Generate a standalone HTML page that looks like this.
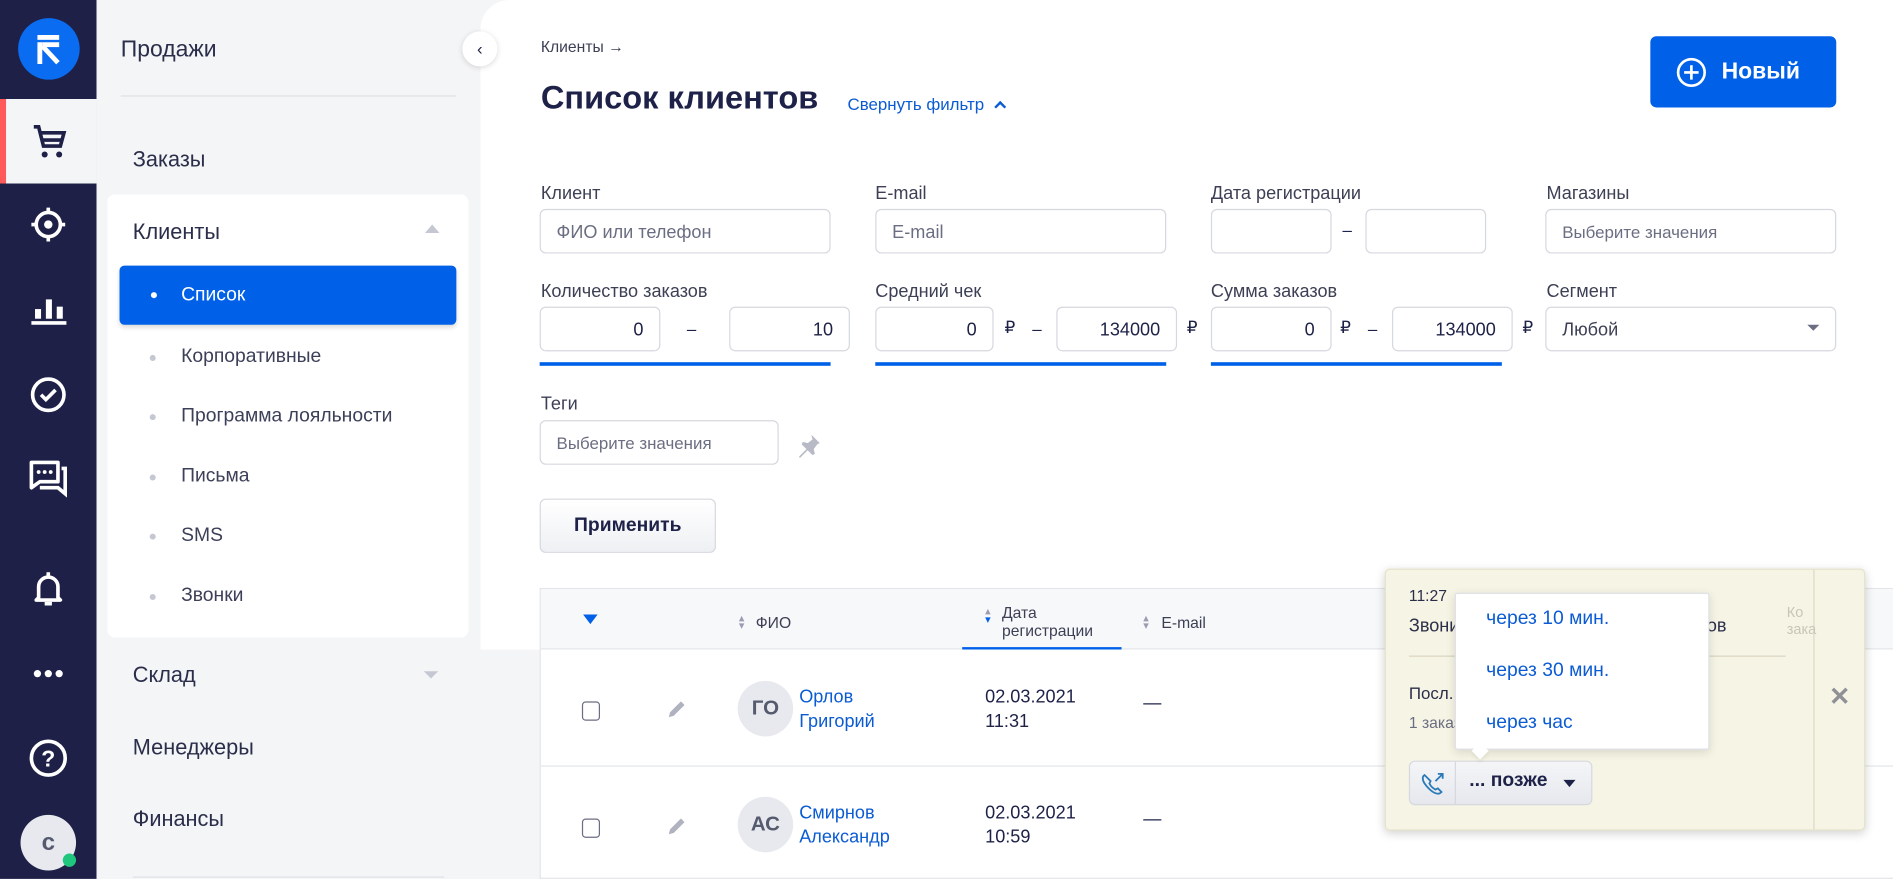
<!DOCTYPE html>
<html><head><meta charset="utf-8"><style>
*{box-sizing:border-box;margin:0;padding:0}
html,body{width:1893px;height:879px;overflow:hidden;background:#f4f5f7}
#w{position:absolute;left:0;top:0;width:1568px;height:728px;transform:scale(1.20727);transform-origin:0 0;font-family:"Liberation Sans","Noto Sans CJK SC",sans-serif;color:#1e2248}
.a{position:absolute}
.rail{left:0;top:0;width:80px;height:728px;background:#1e2048}
.ic{position:absolute;left:20px;width:40px;height:40px}
.side{left:80px;top:0;width:318px;height:728px;background:#f4f5f7}
.mi{position:absolute;left:30px;font-size:18px;color:#2b2e4a}
.sub{position:absolute;left:70px;font-size:16px;color:#3c3f58}
.dot{position:absolute;left:44px;width:5px;height:5px;border-radius:50%;background:#c5c8d3}
.main{left:398px;top:0;width:1170px;height:538px;background:#fff;border-top-left-radius:24px}
.lbl{position:absolute;font-size:15px;color:#3d4055}
.inp{position:absolute;height:37px;border:1px solid #d6d8e0;border-radius:5px;background:#fff;font-size:15px;color:#6b6e82;padding:10px 13px}
.num{text-align:right;color:#1e2248}
.rub{position:absolute;font-size:14px;color:#1e2248}
.uline{position:absolute;height:3px;background:#0061e8}
.blue{color:#0b5bd3}
</style></head><body><div id="w">
<div class="a rail">
 <div class="a" style="left:15px;top:15px;width:51px;height:51px;border-radius:50%;background:#0a6cf0"></div>
 <svg class="a" style="left:28px;top:26px" width="26" height="30" viewBox="0 0 26 30"><rect x="3" y="3" width="18" height="4" fill="#fff"/><rect x="7" y="9" width="14" height="4" fill="#fff"/><rect x="3" y="9" width="4" height="18" fill="#fff"/><path d="M7 12 L20 26" stroke="#fff" stroke-width="4"/></svg>
 <div class="a" style="left:0;top:82px;width:80px;height:70px;background:#f4f5f7"></div>
 <div class="a" style="left:0;top:82px;width:5px;height:70px;background:#ff5a5a"></div>
 <svg class="ic" style="top:97px" viewBox="0 0 40 40"><path d="M8 8h4l4 16h14l3-11H14" fill="none" stroke="#1e2048" stroke-width="3"/><path d="M15 19h16" stroke="#1e2048" stroke-width="3"/><circle cx="17" cy="31" r="2.5" fill="#1e2048"/><circle cx="29" cy="31" r="2.5" fill="#1e2048"/></svg>
 <svg class="ic" style="top:166px" viewBox="0 0 40 40"><circle cx="20" cy="20" r="10" fill="none" stroke="#fff" stroke-width="3"/><circle cx="20" cy="20" r="3.5" fill="#fff"/><path d="M20 6v5M20 29v5M6 20h5M29 20h5" stroke="#fff" stroke-width="3"/></svg>
 <svg class="ic" style="top:236px" viewBox="0 0 40 40"><rect x="9" y="20" width="5" height="8" fill="#fff"/><rect x="18" y="12" width="5" height="16" fill="#fff"/><rect x="27" y="18" width="5" height="10" fill="#fff"/><rect x="6" y="30" width="29" height="3" fill="#fff"/></svg>
 <svg class="ic" style="top:307px" viewBox="0 0 40 40"><circle cx="20" cy="20" r="13" fill="none" stroke="#fff" stroke-width="3"/><path d="M14 20l4 4 8-8" fill="none" stroke="#fff" stroke-width="3"/></svg>
 <svg class="ic" style="top:376px" viewBox="0 0 40 40"><path d="M6 7h22v16H13l-7 5z" fill="none" stroke="#fff" stroke-width="3" stroke-linejoin="round"/><path d="M31 12h3v21l-6-5H13" fill="none" stroke="#fff" stroke-width="3"/><circle cx="12" cy="15" r="1.6" fill="#fff"/><circle cx="17" cy="15" r="1.6" fill="#fff"/><circle cx="22" cy="15" r="1.6" fill="#fff"/></svg>
 <svg class="ic" style="top:468px" viewBox="0 0 40 40"><path d="M12 27V18a8 8 0 0 1 16 0v9l2 2H10z" fill="none" stroke="#fff" stroke-width="3" stroke-linejoin="round"/><path d="M17 32h6" stroke="#fff" stroke-width="3"/><path d="M20 6v4" stroke="#fff" stroke-width="3"/></svg>
 <svg class="ic" style="top:538px" viewBox="0 0 40 40"><circle cx="11" cy="20" r="3" fill="#fff"/><circle cx="20" cy="20" r="3" fill="#fff"/><circle cx="29" cy="20" r="3" fill="#fff"/></svg>
 <svg class="ic" style="top:608px" viewBox="0 0 40 40"><circle cx="20" cy="20" r="14" fill="none" stroke="#fff" stroke-width="3"/><text x="20" y="27" text-anchor="middle" font-size="19" font-weight="bold" fill="#fff" font-family="Liberation Sans">?</text></svg>
 <div class="a" style="left:17px;top:675px;width:46px;height:46px;border-radius:50%;background:#e8e9ee;font-size:20px;font-weight:bold;color:#555a6e;text-align:center;line-height:46px">c</div>
 <div class="a" style="left:52px;top:707px;width:11px;height:11px;border-radius:50%;background:#1fc77e"></div>
</div>
<div class="a side">
 <div class="mi" style="left:20px;top:31px;font-size:19px">Продажи</div>
 <div class="a" style="left:20px;top:79px;width:278px;height:1px;background:#dfe1e6"></div>
 <div class="mi" style="top:122px">Заказы</div>
 <div class="a" style="left:9px;top:161px;width:299px;height:367px;background:#fff;border-radius:6px"></div>
 <div class="mi" style="top:182px">Клиенты</div>
 <div class="a" style="left:272px;top:186px;border:6px solid transparent;border-bottom:7px solid #c5c8d3;border-top:0"></div>
 <div class="a" style="left:19px;top:220px;width:279px;height:49px;background:#0061e8;border-radius:4px;box-shadow:0 2px 4px rgba(0,0,0,.15)"></div>
 <div class="a" style="left:45px;top:242px;width:5px;height:5px;border-radius:50%;background:#fff"></div>
 <div class="sub" style="top:236px;color:#fff">Список</div>
 <div class="dot" style="top:294px"></div><div class="sub" style="top:287px">Корпоративные</div>
 <div class="dot" style="top:343px"></div><div class="sub" style="top:336px">Программа лояльности</div>
 <div class="dot" style="top:393px"></div><div class="sub" style="top:386px">Письма</div>
 <div class="dot" style="top:442px"></div><div class="sub" style="top:435px">SMS</div>
 <div class="dot" style="top:492px"></div><div class="sub" style="top:485px">Звонки</div>
 <div class="mi" style="top:549px">Склад</div>
 <div class="a" style="left:271px;top:556px;border:6px solid transparent;border-top:6px solid #c5c8d3;border-bottom:0"></div>
 <div class="mi" style="top:609px">Менеджеры</div>
 <div class="mi" style="top:668px">Финансы</div>
 <div class="a" style="left:30px;top:726px;width:258px;height:1px;background:#dfe1e6"></div>
</div>
<div class="a main"></div>
<div class="a" style="left:383px;top:26px;width:29px;height:29px;border-radius:50%;background:#fff;box-shadow:0 1px 5px rgba(0,0,0,.15);text-align:center;font-size:14px;line-height:28px;color:#1e2248">‹</div>
<div class="a" style="left:448px;top:31px;font-size:13px;color:#3d4055">Клиенты →</div>
<div class="a" style="left:448px;top:66px;font-size:27px;font-weight:bold;color:#1e2248">Список клиентов</div>
<div class="a blue" style="left:702px;top:78px;font-size:14px">Свернуть фильтр <span style="display:inline-block;width:7px;height:7px;border-left:2px solid #0b5bd3;border-top:2px solid #0b5bd3;transform:rotate(45deg);margin-left:6px;position:relative;top:1px"></span></div>
<div class="a" style="left:1367px;top:30px;width:154px;height:59px;background:#0061e8;border-radius:5px;color:#fff;font-size:19px;font-weight:bold;line-height:59px;padding-left:59px">Новый</div>
<svg class="a" style="left:1388px;top:47px" width="26" height="26" viewBox="0 0 26 26"><circle cx="13" cy="13" r="11" fill="none" stroke="#fff" stroke-width="2.2"/><path d="M13 7v12M7 13h12" stroke="#fff" stroke-width="2.2"/></svg>

<div class="lbl" style="left:448px;top:152px">Клиент</div>
<div class="inp" style="left:447px;top:173px;width:241px">ФИО или телефон</div>
<div class="lbl" style="left:725px;top:152px">E-mail</div>
<div class="inp" style="left:725px;top:173px;width:241px">E-mail</div>
<div class="lbl" style="left:1003px;top:152px">Дата регистрации</div>
<div class="inp" style="left:1003px;top:173px;width:100px"></div>
<div class="rub" style="left:1112px;top:182px">–</div>
<div class="inp" style="left:1131px;top:173px;width:100px"></div>
<div class="lbl" style="left:1281px;top:152px">Магазины</div>
<div class="inp" style="left:1280px;top:173px;width:241px;font-size:14px">Выберите значения</div>

<div class="lbl" style="left:448px;top:233px">Количество заказов</div>
<div class="inp num" style="left:447px;top:254px;width:100px">0</div>
<div class="rub" style="left:569px;top:264px">–</div>
<div class="inp num" style="left:604px;top:254px;width:100px">10</div>
<div class="uline" style="left:447px;top:300px;width:241px"></div>
<div class="lbl" style="left:725px;top:233px">Средний чек</div>
<div class="inp num" style="left:725px;top:254px;width:98px">0</div>
<div class="rub" style="left:832px;top:263px">₽</div><div class="rub" style="left:855px;top:264px">–</div>
<div class="inp num" style="left:875px;top:254px;width:100px">134000</div>
<div class="rub" style="left:983px;top:263px">₽</div>
<div class="uline" style="left:725px;top:300px;width:241px"></div>
<div class="lbl" style="left:1003px;top:233px">Сумма заказов</div>
<div class="inp num" style="left:1003px;top:254px;width:100px">0</div>
<div class="rub" style="left:1110px;top:263px">₽</div><div class="rub" style="left:1133px;top:264px">–</div>
<div class="inp num" style="left:1153px;top:254px;width:100px">134000</div>
<div class="rub" style="left:1261px;top:263px">₽</div>
<div class="uline" style="left:1003px;top:300px;width:241px"></div>
<div class="lbl" style="left:1281px;top:233px">Сегмент</div>
<div class="inp" style="left:1280px;top:254px;width:241px;color:#3d4055">Любой</div>
<div class="a" style="left:1497px;top:269px;border:5px solid transparent;border-top:5px solid #6b6e82;border-bottom:0"></div>

<div class="lbl" style="left:448px;top:326px">Теги</div>
<div class="inp" style="left:447px;top:348px;width:198px;font-size:14px">Выберите значения</div>
<svg class="a" style="left:658px;top:357px" width="24" height="24" viewBox="0 0 24 24"><path d="M14 3l7 7-2 1-3 4 1 4-2 1-4-4-6 6-1 0 0-1 6-6-4-4 1-2 4 1 4-3z" fill="#b8bbc6"/></svg>
<div class="a" style="left:447px;top:413px;width:146px;height:45px;border:1px solid #d6d8e0;border-radius:5px;background:linear-gradient(#fff,#eef0f3);font-size:16px;font-weight:bold;text-align:center;line-height:44px">Применить</div>

<div class="a" style="left:447px;top:487px;width:1121px;height:241px;background:#fff;border:1px solid #e3e5ea;border-right:0"></div>
<div class="a" style="left:448px;top:488px;width:1120px;height:50px;background:#f7f8fa;border-bottom:1px solid #e3e5ea"></div>
<div class="a" style="left:483px;top:509px;border:6px solid transparent;border-top:8px solid #0061e8;border-bottom:0"></div>
<div class="a" style="left:612px;top:509px;font-size:9px;color:#9a9db0;line-height:6px">▴<br>▾</div>
<div class="a" style="left:626px;top:508px;font-size:13px;color:#3d4055">ФИО</div>
<div class="a" style="left:816px;top:503px;font-size:9px;color:#9a9db0;line-height:7px">▴<br><span style="color:#0061e8">▾</span></div>
<div class="a" style="left:830px;top:500px;font-size:13px;color:#3d4055;line-height:15px">Дата<br>регистрации</div>
<div class="a" style="left:797px;top:536px;width:132px;height:2px;background:#0061e8"></div>
<div class="a" style="left:947px;top:509px;font-size:9px;color:#9a9db0;line-height:6px">▴<br>▾</div>
<div class="a" style="left:962px;top:508px;font-size:13px;color:#3d4055">E-mail</div>
<div class="a" style="left:448px;top:634px;width:1120px;height:1px;background:#e3e5ea"></div>

<div class="a" style="left:482px;top:581px;width:15px;height:16px;border:1px solid #6b6e82;border-radius:3px"></div>
<div class="a" style="left:482px;top:678px;width:15px;height:16px;border:1px solid #6b6e82;border-radius:3px"></div>
<svg class="a" style="left:551px;top:579px" width="18" height="18" viewBox="0 0 18 18"><path d="M3 15l1-4 9-9 3 3-9 9z" fill="#b0b3bf"/></svg>
<svg class="a" style="left:551px;top:676px" width="18" height="18" viewBox="0 0 18 18"><path d="M3 15l1-4 9-9 3 3-9 9z" fill="#b0b3bf"/></svg>
<div class="a" style="left:611px;top:564px;width:46px;height:46px;border-radius:50%;background:#e8e9ee;font-size:17px;font-weight:bold;color:#555a6e;text-align:center;line-height:46px">ГО</div>
<div class="a" style="left:611px;top:660px;width:46px;height:46px;border-radius:50%;background:#e8e9ee;font-size:17px;font-weight:bold;color:#555a6e;text-align:center;line-height:46px">АС</div>
<div class="a blue" style="left:662px;top:568px;font-size:15px;line-height:20px">Орлов<br>Григорий</div>
<div class="a blue" style="left:662px;top:664px;font-size:15px;line-height:20px">Смирнов<br>Александр</div>
<div class="a" style="left:816px;top:568px;font-size:15px;line-height:20px">02.03.2021<br>11:31</div>
<div class="a" style="left:816px;top:664px;font-size:15px;line-height:20px">02.03.2021<br>10:59</div>
<div class="a" style="left:947px;top:574px;font-size:15px">—</div>
<div class="a" style="left:947px;top:670px;font-size:15px">—</div>

<div class="a" style="left:1147px;top:471px;width:398px;height:217px;background:#f6f4e4;border:1px solid #e6e3cc;border-radius:4px;box-shadow:0 2px 8px rgba(0,0,0,.18)"></div>
<div class="a" style="left:1502px;top:472px;width:1px;height:215px;background:#ddd9c0"></div>
<div class="a" style="left:1167px;top:486px;font-size:13px;color:#2b2e4a">11:27</div>
<div class="a" style="left:1167px;top:510px;font-size:15px;color:#2b2e4a">Звонил Смирнов Александр Смирнов</div>
<div class="a" style="left:1167px;top:543px;width:312px;height:1px;background:#d8d5c0"></div>
<div class="a" style="left:1167px;top:566px;font-size:14px;color:#2b2e4a">Посл. заказ 42C (02.03.2021, Новый)</div>
<div class="a" style="left:1167px;top:591px;font-size:13px;color:#6b6e82">1 заказ</div>
<div class="a" style="left:1515px;top:565px;font-size:21px;font-weight:bold;color:#909196">✕</div>
<div class="a" style="left:1480px;top:500px;font-size:12px;color:#c8c6b8;line-height:14px">Ко<br>зака</div>
<div class="a" style="left:1167px;top:630px;width:152px;height:37px;border:1px solid #d6d8e0;border-radius:5px;background:linear-gradient(#f4f5f7,#e6e8ee)"></div>
<div class="a" style="left:1205px;top:631px;width:1px;height:35px;background:#d6d8e0"></div>
<svg class="a" style="left:1175px;top:637px" width="24" height="24" viewBox="0 0 24 24"><path d="M5 5c-2 1-2 4 0 7s6 7 9 8 4 0 5-1l-3-3-2 1c-2-1-4-3-5-5l1-2-3-3z" fill="none" stroke="#2a7ab8" stroke-width="1.5"/><path d="M14 10l6-6M16 4h4v4" fill="none" stroke="#2a7ab8" stroke-width="1.5"/></svg>
<div class="a" style="left:1217px;top:638px;font-size:16px;font-weight:bold;color:#1e2248">... позже</div>
<div class="a" style="left:1295px;top:646px;border:5px solid transparent;border-top:6px solid #1e2248;border-bottom:0"></div>
<div class="a" style="left:1205px;top:491px;width:211px;height:130px;background:#fff;border:1px solid #e0e2e8;border-radius:2px;box-shadow:0 2px 8px rgba(0,0,0,.12)"></div>
<div class="a" style="left:1221px;top:617px;width:10px;height:10px;background:#fff;transform:rotate(45deg);box-shadow:2px 2px 3px rgba(0,0,0,.06)"></div>
<div class="a blue" style="left:1231px;top:504px;font-size:16px">через 10 мин.</div>
<div class="a blue" style="left:1231px;top:547px;font-size:16px">через 30 мин.</div>
<div class="a blue" style="left:1231px;top:590px;font-size:16px">через час</div>
</div></body></html>
